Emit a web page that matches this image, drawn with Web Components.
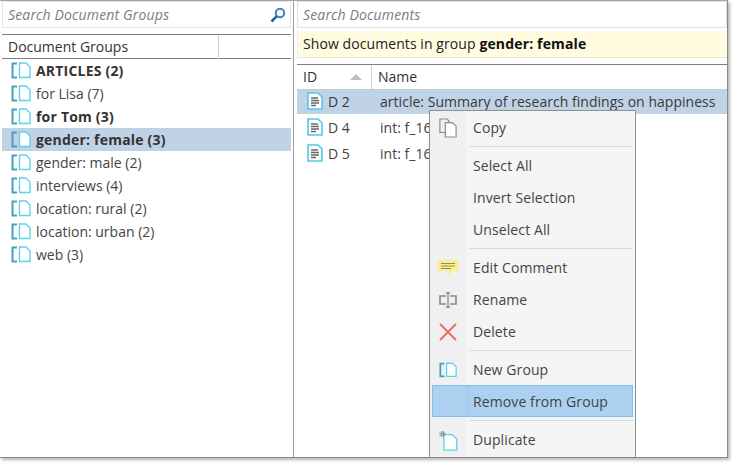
<!DOCTYPE html>
<html lang="en">
  <head>
    <meta charset="UTF-8" />
    <title>Document Groups</title>
    <style>
      html, body { margin: 0; height: 100%; background: #fff; overflow: hidden; }
      body { font: 14px "Open Sans", "Noto Sans", sans-serif; color: #333; }
    </style>
  </head>
  <body>
    <app-window>
      <group-pane slot="left">
        <group-row>ARTICLES (2)</group-row>
        <group-row plain>for Lisa (7)</group-row>
        <group-row>for Tom (3)</group-row>
        <group-row selected>gender: female (3)</group-row>
        <group-row plain>gender: male (2)</group-row>
        <group-row plain>interviews (4)</group-row>
        <group-row plain>location: rural (2)</group-row>
        <group-row plain>location: urban (2)</group-row>
        <group-row plain>web (3)</group-row>
      </group-pane>
      <doc-pane slot="right">
        <doc-row id-text="D 2" selected>article: Summary of research findings on happiness</doc-row>
        <doc-row id-text="D 4">int: f_16</doc-row>
        <doc-row id-text="D 5">int: f_16</doc-row>
      </doc-pane>
      <context-menu slot="menu">
        <menu-item icon="copy">Copy</menu-item>
        <menu-sep></menu-sep>
        <menu-item>Select All</menu-item>
        <menu-item>Invert Selection</menu-item>
        <menu-item>Unselect All</menu-item>
        <menu-sep></menu-sep>
        <menu-item icon="comment">Edit Comment</menu-item>
        <menu-item icon="rename">Rename</menu-item>
        <menu-item icon="delete">Delete</menu-item>
        <menu-sep></menu-sep>
        <menu-item icon="group">New Group</menu-item>
        <menu-item active>Remove from Group</menu-item>
        <menu-sep></menu-sep>
        <menu-item icon="duplicate">Duplicate</menu-item>
      </context-menu>
    </app-window>

    <script type="module">
      const FONT = `"Open Sans", "Noto Sans", sans-serif`;

      const ICONS = {
        group: `<svg width="20" height="17" viewBox="0 0 20 17"><path d="M6 1.5H1.5v14H6" fill="none" stroke="#4a9fc0" stroke-width="2"/><path d="M8.5 1H15l4 4v10.5H8.5z" fill="#fff" stroke="#5fd3ee" stroke-width="1.4"/></svg>`,
        doc: `<svg width="16" height="18" viewBox="0 0 16 18"><path d="M1 1h10l4 4v12H1z" fill="#fff" stroke="#52c8ea" stroke-width="1.6"/><path d="M4 6h7M4 8.5h8M4 11h8M4 13.5h5" stroke="#666" stroke-width="1.3"/></svg>`,
        copy: `<svg width="18" height="20" viewBox="0 0 20 22"><path d="M1 1h8l2 2v13H1z" fill="#f0f0f0" stroke="#8a8a8a" stroke-width="1.3"/><path d="M7 5h8l4 4v12H7z" fill="#fff" stroke="#8a8a8a" stroke-width="1.3"/></svg>`,
        comment: `<svg width="20" height="16" viewBox="0 0 20 16"><path d="M0 0h20v11h-6l-3 4-2-4H0z" fill="#fdee8d"/><path d="M3 3.5h14M3 6h14M3 8.5h10" stroke="#8d8d75" stroke-width="1.2"/></svg>`,
        rename: `<svg width="18" height="16" viewBox="0 0 18 16"><path d="M7 4H1v8h6M11 4h6v8h-6" fill="none" stroke="#8b8b8b" stroke-width="1.7"/><path d="M7 1h4M7 15h4M9 1v14" fill="none" stroke="#8b8b8b" stroke-width="1.3"/></svg>`,
        delete: `<svg width="18" height="18" viewBox="0 0 18 18"><path d="M1 1l16 16M17 1L1 17" stroke="#f0675c" stroke-width="1.8"/></svg>`,
        duplicate: `<svg width="19" height="21" viewBox="0 0 20 23"><path d="M5 5h9l5 5v12H5z" fill="#fff" stroke="#5fd3ee" stroke-width="1.5"/><path d="M0 3.5h7M0 5.5h7M2.5 1v7M4.5 1v7" stroke="#888" stroke-width="1"/></svg>`,
        search: `<svg width="16" height="16" viewBox="0 0 16 16"><circle cx="10" cy="6" r="4.2" fill="none" stroke="#3d7fc0" stroke-width="2"/><path d="M6.8 9.2L1.5 14.5" stroke="#2a5f9e" stroke-width="2.6"/></svg>`,
      };

      function define(name, css, html) {
        customElements.define(
          name,
          class extends HTMLElement {
            constructor() {
              super();
              this.attachShadow({ mode: "open" });
              this.shadowRoot.innerHTML = `<style>${css}</style>${html(this)}`;
            }
          }
        );
      }

      define(
        "search-box",
        `:host { display: flex; align-items: center; justify-content: space-between; box-sizing: border-box; height: 27px;
           padding: 0 4px 0 5px; background: #fff; border: 1px solid #dfe3ea; }
         span { font: italic 14px ${FONT}; color: #7c7c7c; letter-spacing: 0.15px; }
         svg { display: block; }`,
        (el) => `<span>${el.getAttribute("label")}</span>${el.hasAttribute("icon") ? ICONS.search : ""}`
      );

      define(
        "app-window",
        `:host { display: block; position: relative; box-sizing: border-box; width: 728px; height: 458px; background: #fff;
           border-top: 1px solid #a5a5a5; border-right: 1px solid #8a8a8a; border-bottom: 1px solid #8a8a8a;
           box-shadow: 2px 2px 3px #b5b5b5; }
         .split { display: grid; grid-template-columns: 294px 1fr; height: 100%; }
         .l { border-right: 1px solid #9a9a9a; min-width: 0; }
         .r { min-width: 0; padding-left: 3px; }`,
        () => `<div class="split"><div class="l"><slot name="left"></slot></div><div class="r"><slot name="right"></slot></div></div><slot name="menu"></slot>`
      );

      define(
        "group-pane",
        `:host { display: block; padding: 0 2px 0 2px; }
         .head { display: grid; grid-template-columns: 217px 1fr; height: 23px; margin-top: 6px; border-top: 1px solid #7e7e7e; border-bottom: 1px solid #7e7e7e; }
         .head div { padding-left: 6px; line-height: 24px; color: #333; }
         .head div:first-child { border-right: 1px solid #d0d0d0; }`,
        () => `<search-box label="Search Document Groups" icon></search-box>
          <div class="head"><div>Document Groups</div><div></div></div><slot></slot>`
      );

      define(
        "group-row",
        `:host { display: flex; align-items: center; gap: 5px; height: 23px; padding-left: 9px; font-weight: 700; color: #333; letter-spacing: 0.2px; }
         :host([plain]) { font-weight: 400; color: #444; letter-spacing: 0; }
         :host([selected]) { background: #c0d2e5; }
         svg { display: block; flex: none; }`,
        () => `${ICONS.group}<span><slot></slot></span>`
      );

      define(
        "doc-pane",
        `:host { display: block; }
         .note { height: 26px; margin-top: 3px; padding-left: 5px; line-height: 26px; background: #fffcdf; border-bottom: 1px solid #e8e4c8; border-left: 1px solid #eee; color: #222; letter-spacing: 0.08px; }
         b { color: #111; letter-spacing: 0.15px; }
         .head { display: grid; grid-template-columns: 75px 1fr; height: 24px; margin-top: 6px; border-top: 1px solid #7e7e7e; border-bottom: 1px solid #c9c9c9; }
         .head div { padding-left: 6px; line-height: 23px; position: relative; }
         .head div:first-child { border-right: 1px solid #d0d0d0; }
         i { position: absolute; left: 53px; top: 9px; border: 6px solid transparent; border-top: 0; border-bottom: 6px solid #bdbdbd; }`,
        () => `<search-box label="Search Documents"></search-box>
          <div class="note">Show documents in group <b>gender: female</b></div>
          <div class="head"><div>ID<i></i></div><div>Name</div></div><slot></slot>`
      );

      define(
        "doc-row",
        `:host { display: grid; grid-template-columns: 83px 1fr; align-items: center; box-sizing: border-box; height: 24px; padding-bottom: 2px; margin-bottom: 2px; color: #444; letter-spacing: 0.03px; }
         :host([selected]) { background: #c0d2e5; color: #3a3a3a; }
         .id { display: flex; align-items: center; gap: 5px; padding-left: 10px; }
         svg { display: block; }`,
        (el) => `<div class="id">${ICONS.doc}<span>${el.getAttribute("id-text")}</span></div><div><slot></slot></div>`
      );

      define(
        "context-menu",
        `:host { display: block; position: absolute; left: 429px; top: 109px; box-sizing: border-box; width: 207px; height: 347px;
           padding: 0 2px; background: linear-gradient(to right, #f0f0f0 36px, #f5f5f5 36px); border: 1px solid #8f8f8f; border-bottom: 0; }`,
        () => `<slot></slot>`
      );

      define(
        "menu-item",
        `:host { display: grid; grid-template-columns: 41px 1fr; align-items: center; box-sizing: border-box; height: 32px; color: #444; letter-spacing: 0.1px; }
         :host([active]) { background: #acd0f0; border: 1px solid #7cc3e6; grid-template-columns: 40px 1fr; }
         .i { display: flex; justify-content: center; align-items: center; padding: 2px 9px 0 0; }
         :host([icon="group"]) svg { width: 18px; height: 16px; }
         :host([active]) .i { align-self: stretch; box-sizing: border-box; margin-right: 5px; border-right: 1px dotted #8fbbe0; padding: 0; }
         svg { display: block; }`,
        (el) => `<div class="i">${ICONS[el.getAttribute("icon")] || ""}</div><div><slot></slot></div>`
      );

      define(
        "menu-sep",
        `:host { display: block; height: 6px; margin-left: 38px; padding-top: 3px; box-sizing: border-box; }
         div { height: 1px; background: #d7d7d7; }`,
        () => `<div></div>`
      );
    </script>
  </body>
</html>
